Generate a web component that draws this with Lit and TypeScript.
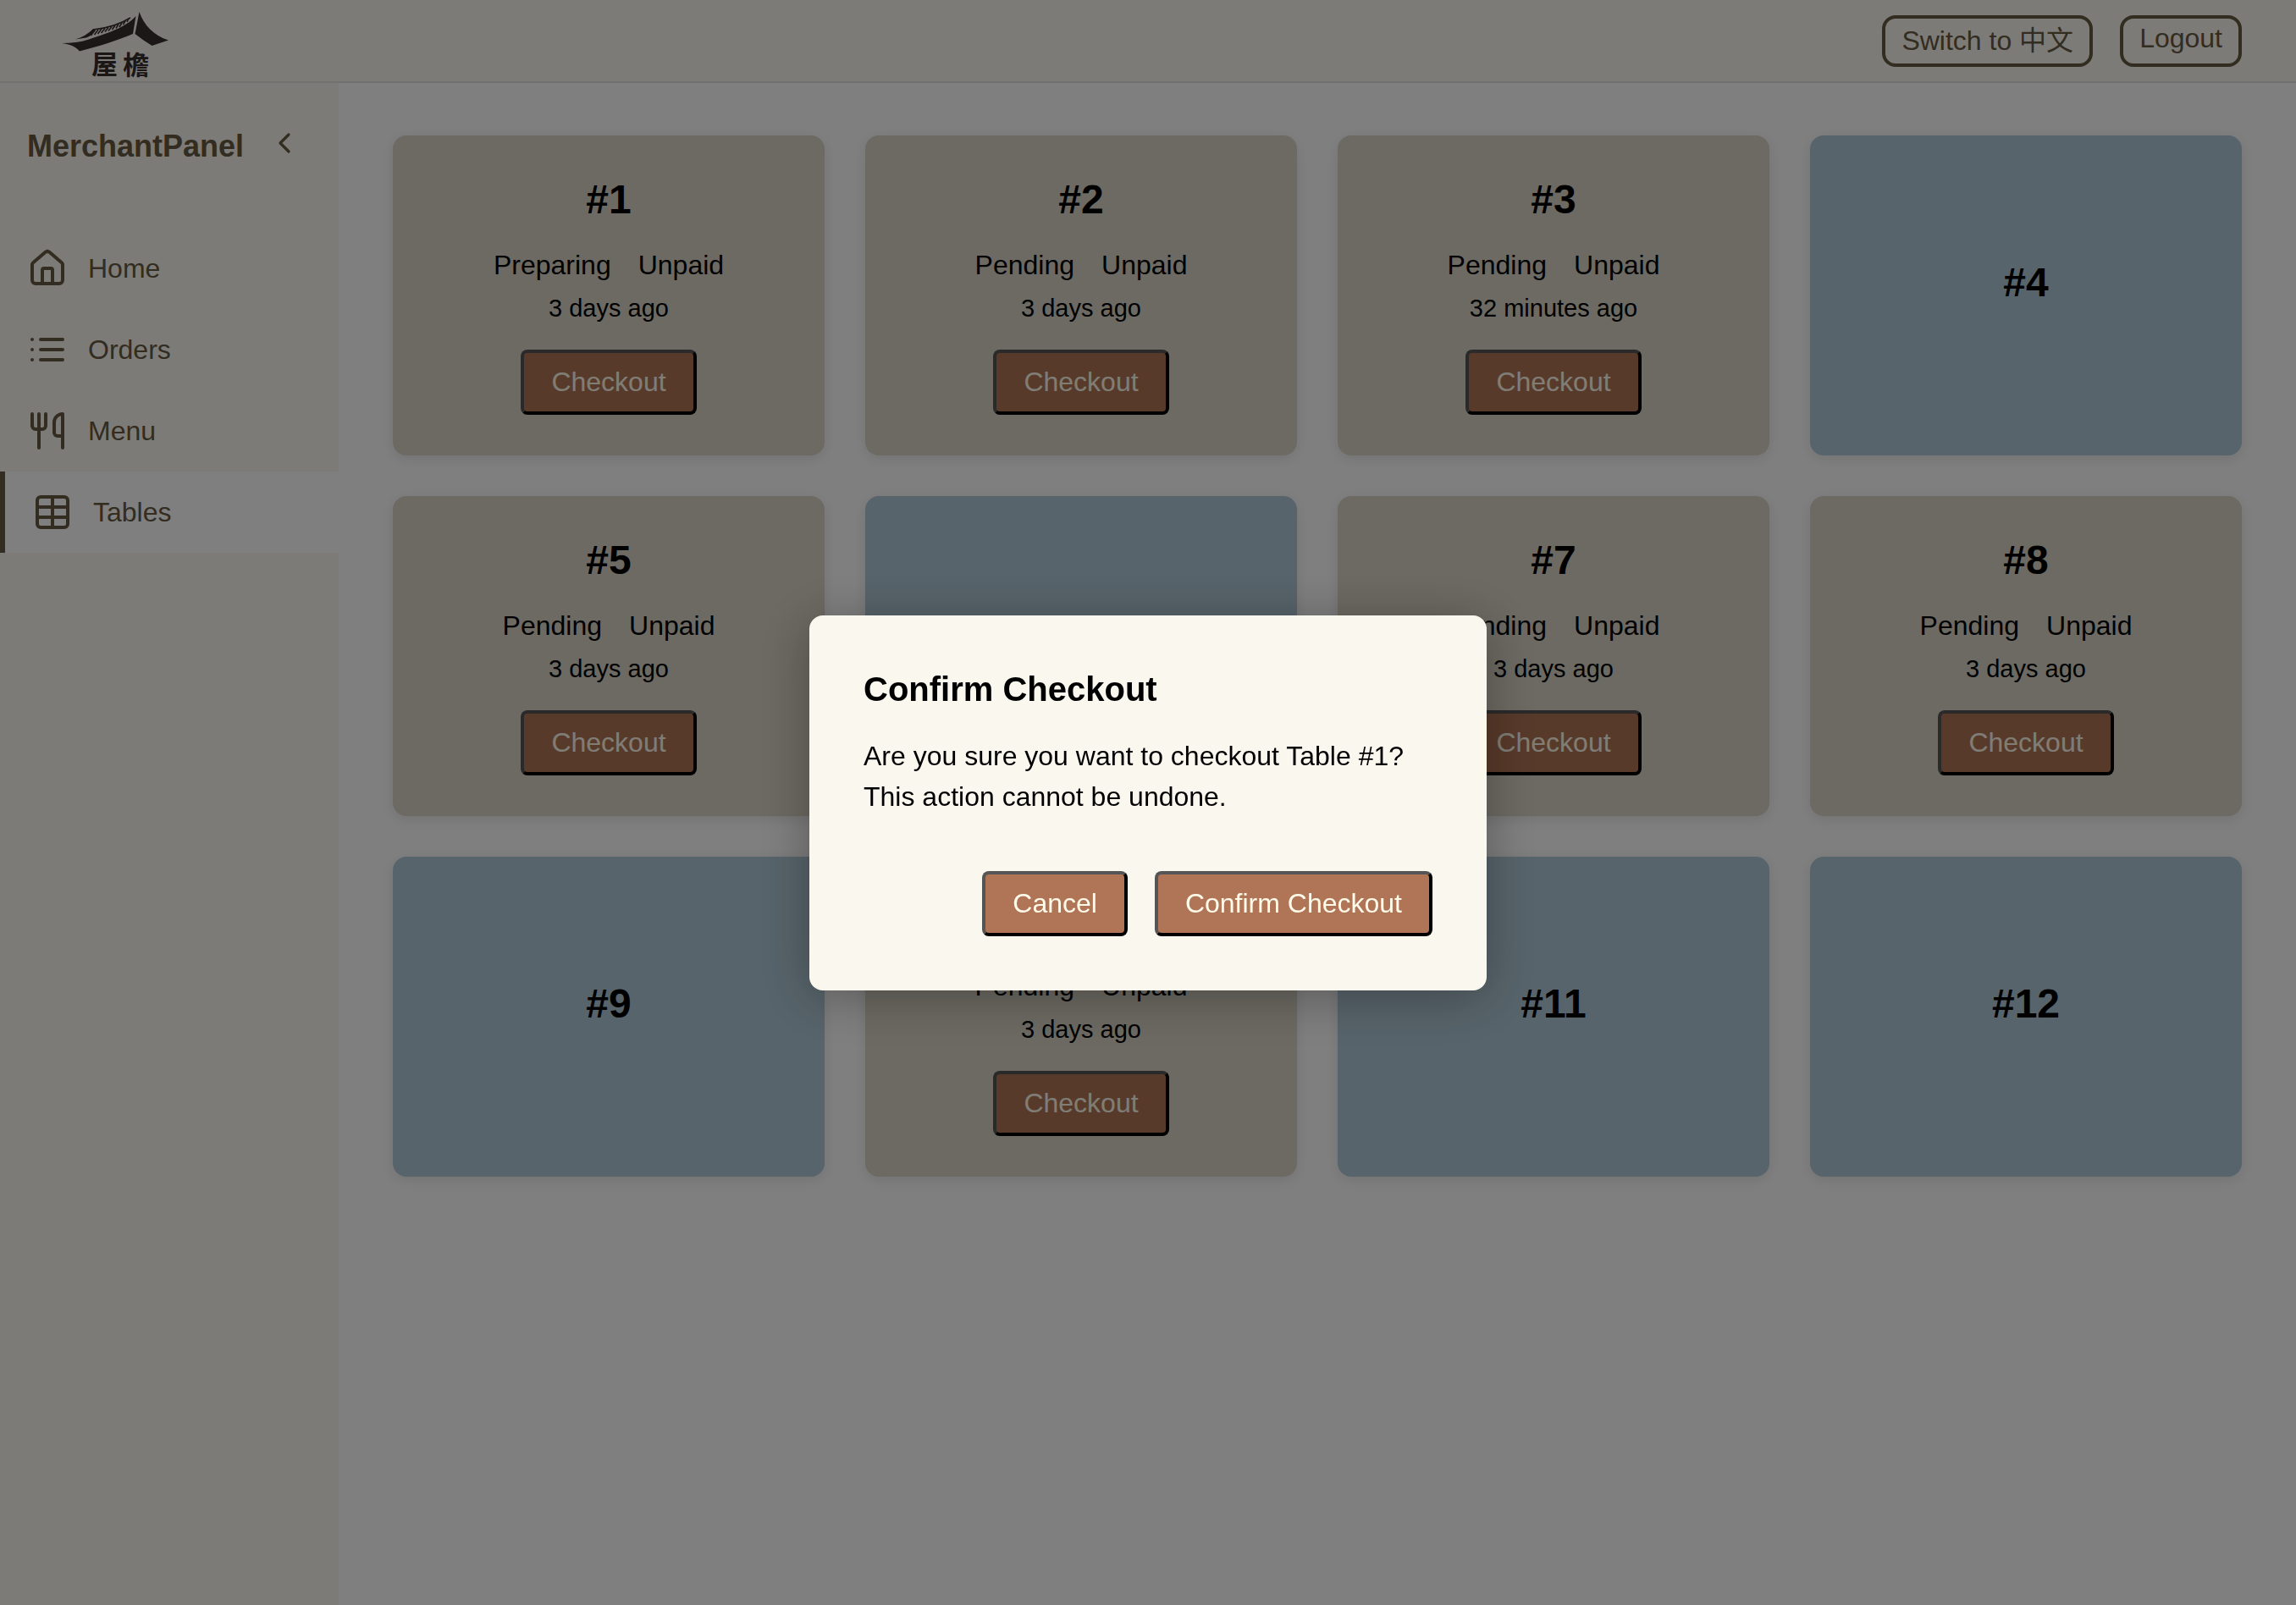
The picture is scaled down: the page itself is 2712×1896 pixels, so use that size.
import { LitElement, html, css, svg, nothing } from "lit";
import { customElement, property, state } from "lit/decorators.js";

type Table = { id: number; status?: string; payment?: string; placed?: string };

const order = (id: number, status = "Pending", placed = "3 days ago"): Table => ({
  id,
  status,
  payment: "Unpaid",
  placed,
});

const TABLES: Table[] = [
  order(1, "Preparing"),
  order(2),
  order(3, "Pending", "32 minutes ago"),
  { id: 4 },
  order(5),
  { id: 6 },
  order(7),
  order(8),
  { id: 9 },
  order(10),
  { id: 11 },
  { id: 12 },
];

const ICONS = {
  home: svg`<path d="M15 21v-8a1 1 0 0 0-1-1h-4a1 1 0 0 0-1 1v8"/><path d="M3 10a2 2 0 0 1 .709-1.528l7-5.999a2 2 0 0 1 2.582 0l7 5.999A2 2 0 0 1 21 10v9a2 2 0 0 1-2 2H5a2 2 0 0 1-2-2z"/>`,
  orders: svg`<path d="M8 6h13M8 12h13M8 18h13M3 6h.01M3 12h.01M3 18h.01"/>`,
  menu: svg`<path d="M3 2v7c0 1.1.9 2 2 2h4a2 2 0 0 0 2-2V2"/><path d="M7 2v20"/><path d="M21 15V2a5 5 0 0 0-5 5v6c0 1.1.9 2 2 2h3Zm0 0v7"/>`,
  tables: svg`<path d="M12 3v18"/><rect width="18" height="18" x="3" y="3" rx="2"/><path d="M3 9h18M3 15h18"/>`,
  chevron: svg`<path d="m15 18-6-6 6-6"/>`,
};

const icon = (name: keyof typeof ICONS) => html`<svg
  class="icon"
  viewBox="0 0 24 24"
  aria-hidden="true"
>
  ${ICONS[name]}
</svg>`;

const actionButton = css`
  .action {
    font: inherit;
    line-height: 37px;
    color: #fffbeb;
    background: #b07456;
    border: 4px solid;
    border-color: #555 #000 #000 #555;
    border-radius: 8px;
    padding: 16px 32px;
    margin: 0;
    cursor: pointer;
  }
`;

const iconStyle = css`
  .icon {
    display: block;
    flex: none;
    width: 48px;
    height: 48px;
    fill: none;
    stroke: currentColor;
    stroke-width: 2;
    stroke-linecap: round;
    stroke-linejoin: round;
  }
`;

@customElement("brand-logo")
export class BrandLogo extends LitElement {
  static styles = css`
    :host {
      display: block;
    }
    .logo {
      display: block;
      width: 160px;
      height: 96px;
    }
    .ink {
      fill: #382f2e;
    }
    .ridge {
      fill: none;
      stroke: #382f2e;
      stroke-width: 1.6;
    }
    .name {
      fill: #382f2e;
      font: 700 31px "Noto Sans CJK TC", sans-serif;
    }
  `;

  render() {
    return html`<svg class="logo" viewBox="0 0 160 96" role="img" aria-label="屋檐">
      <path class="ink" d="M13 51 C24 51 35 50 45 46.500 C64 40 88 33 100.500 19 L97 40 C78 48 56 55 34 60.500 C29 55 22 52 13 51Z" />
      <path class="ink" d="M104.500 14 C110 30 122 42 139 47.500 L119.500 54 C113 50 106 45 99.500 40Z" />
      <path class="ink" d="M29 46.500 C37 44 43 41 50 34 L53 36 C49 41 46 43 42 44.500Z" />
      <path class="ridge" d="M50 35 C66 33.500 82 28.500 94 21" />
      <path
        class="ridge"
        d="M52 35 L47.500 42 M56 35 L51.500 41 M60 34 L55.500 40 M64 33.500 L59.500 39 M68 32.500 L64 37.500 M72 31.500 L68 36.500 M76 30 L72.500 35 M80 28.500 L77 33.500 M84 27 L81 32 M88 24.500 L85.500 29 M92 22 L90 26"
      />
      <text class="name" x="48" y="87">屋</text>
      <text class="name" x="85" y="88">檐</text>
    </svg>`;
  }
}

@customElement("app-header")
export class AppHeader extends LitElement {
  static styles = css`
    :host {
      display: flex;
      align-items: center;
      justify-content: space-between;
      height: 96px;
      padding: 0 64px 0 60px;
      background: #faf7ef;
      box-shadow: 0 2px 0 #e2e1df;
      position: relative;
      z-index: 1;
    }
    .actions {
      display: flex;
      gap: 32px;
    }
    .pill {
      display: flex;
      align-items: flex-start;
      font: inherit;
      line-height: 43px;
      color: #675943;
      background: none;
      border: 4px solid #675943;
      border-radius: 16px;
      padding: 5px 19px;
      margin: 0;
      cursor: pointer;
    }
    .logout {
      line-height: 36px;
    }
  `;

  render() {
    return html`
      <brand-logo></brand-logo>
      <div class="actions">
        <button class="pill" type="button">Switch to 中文</button>
        <button class="pill logout" type="button">Logout</button>
      </div>
    `;
  }
}

@customElement("side-bar")
export class SideBar extends LitElement {
  static styles = [
    iconStyle,
    css`
      :host {
        display: block;
        background: #faf7ef;
        color: #675943;
      }
      .top {
        display: flex;
        align-items: flex-start;
        justify-content: space-between;
        padding: 53px 44px 72px 32px;
      }
      .title {
        margin: 0;
        font-size: 36px;
        line-height: 48px;
        font-weight: 700;
      }
      .collapse {
        padding: 0;
        border: 0;
        background: none;
        color: inherit;
        cursor: pointer;
      }
      .collapse .icon {
        width: 40px;
        height: 40px;
      }
      .link {
        display: flex;
        align-items: center;
        gap: 24px;
        height: 96px;
        padding: 0 32px;
        box-sizing: border-box;
        color: inherit;
        text-decoration: none;
      }
      .current {
        background: #fff;
        border-left: 6px solid #675943;
      }
    `,
  ];

  render() {
    return html`
      <div class="top">
        <h1 class="title">MerchantPanel</h1>
        <button class="collapse" type="button" aria-label="Collapse">${icon("chevron")}</button>
      </div>
      <nav>
        <a class="link" href="#home">${icon("home")}<span>Home</span></a>
        <a class="link" href="#orders">${icon("orders")}<span>Orders</span></a>
        <a class="link" href="#menu">${icon("menu")}<span>Menu</span></a>
        <a class="link current" href="#tables" aria-current="page">${icon("tables")}<span>Tables</span></a>
      </nav>
    `;
  }
}

@customElement("table-card")
export class TableCard extends LitElement {
  @property({ attribute: false }) table!: Table;

  static styles = [
    actionButton,
    css`
      :host {
        display: flex;
      }
      .card {
        flex: 1;
        display: flex;
        flex-direction: column;
        align-items: center;
        justify-content: center;
        padding: 48px;
        border-radius: 16px;
        background: #b0c8d6;
        box-shadow: 0 4px 16px rgba(0, 0, 0, 0.1);
      }
      .busy {
        background: #dad4c6;
      }
      .number {
        margin: 0 0 32px;
        font-size: 48px;
        line-height: 55px;
        font-weight: 700;
      }
      .status {
        display: flex;
        gap: 32px;
        line-height: 37px;
        margin-bottom: 16px;
      }
      .placed {
        font-size: 29px;
        line-height: 33px;
        margin-bottom: 32px;
      }
    `,
  ];

  private checkout() {
    this.dispatchEvent(new CustomEvent("checkout", { detail: this.table.id }));
  }

  render() {
    const { id, status, payment, placed } = this.table;
    return html`<article class="card ${status ? "busy" : ""}">
      <h2 class="number">#${id}</h2>
      ${status
        ? html`
            <div class="status"><span>${status}</span><span>${payment}</span></div>
            <div class="placed">${placed}</div>
            <button class="action" type="button" @click=${this.checkout}>Checkout</button>
          `
        : nothing}
    </article>`;
  }
}

@customElement("checkout-dialog")
export class CheckoutDialog extends LitElement {
  @property({ type: Number }) table = 0;

  static styles = [
    actionButton,
    css`
      :host {
        position: fixed;
        inset: 0;
        z-index: 2;
        display: flex;
        align-items: center;
        justify-content: center;
        background: rgba(0, 0, 0, 0.5);
      }
      .dialog {
        box-sizing: border-box;
        width: 90%;
        max-width: 800px;
        padding: 64px;
        border-radius: 16px;
        background: #faf7ef;
        box-shadow: 0 8px 60px rgba(0, 0, 0, 0.3);
      }
      .heading {
        margin: 0 0 32px;
        font-size: 40px;
        line-height: 46px;
        font-weight: 700;
      }
      .message {
        margin: 0 0 64px;
        line-height: 48px;
      }
      .buttons {
        display: flex;
        justify-content: flex-end;
        gap: 32px;
      }
    `,
  ];

  private close() {
    this.dispatchEvent(new CustomEvent("close"));
  }

  render() {
    return html`<section class="dialog" role="dialog" aria-modal="true" aria-labelledby="heading">
      <h2 class="heading" id="heading">Confirm Checkout</h2>
      <p class="message">
        Are you sure you want to checkout Table #${this.table}? This action cannot be undone.
      </p>
      <div class="buttons">
        <button class="action" type="button" @click=${this.close}>Cancel</button>
        <button class="action" type="button" @click=${this.close}>Confirm Checkout</button>
      </div>
    </section>`;
  }
}

@customElement("app-root")
export class AppRoot extends LitElement {
  @state() private selected = 1;

  static styles = css`
    :host {
      display: flex;
      flex-direction: column;
      min-height: 100vh;
      background: #fff;
      color: #000;
      font-family: "Liberation Sans", Helvetica, Arial, "Noto Sans CJK SC", sans-serif;
      font-size: 32px;
    }
    .body {
      flex: 1;
      display: grid;
      grid-template-columns: 400px 1fr;
    }
    .tables {
      display: grid;
      grid-template-columns: repeat(4, 1fr);
      grid-auto-rows: 378px;
      gap: 48px;
      padding: 64px;
    }
  `;

  render() {
    return html`
      <app-header></app-header>
      <div class="body">
        <side-bar></side-bar>
        <main class="tables">
          ${TABLES.map(
            (table) => html`<table-card
              .table=${table}
              @checkout=${(e: CustomEvent<number>) => (this.selected = e.detail)}
            ></table-card>`,
          )}
        </main>
      </div>
      ${this.selected
        ? html`<checkout-dialog
            .table=${this.selected}
            @close=${() => (this.selected = 0)}
          ></checkout-dialog>`
        : nothing}
    `;
  }
}
